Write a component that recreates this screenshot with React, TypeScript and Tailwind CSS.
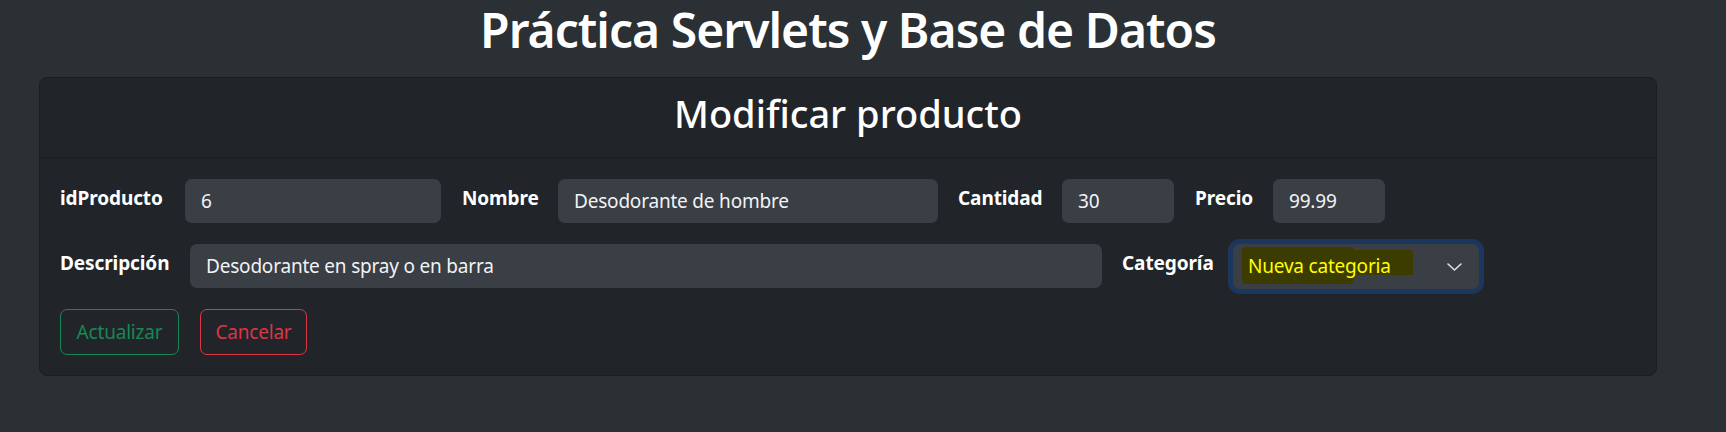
const Label = ({ text, w }: { text: string; w: string }) => (
  <label className={`${w} block shrink-0 whitespace-nowrap pt-[4px] text-[19px] leading-[30px] font-bold tracking-[-0.1px] text-white`}>
    {text}
  </label>
);

const Input = ({ value, w }: { value: string; w: string }) => (
  <div
    className={`${w} flex h-[44px] shrink-0 items-center rounded-[7px] bg-[#3a3e45] px-4 text-[19px] tracking-[-0.2px] text-[#f1f3f5]`}
  >
    {value}
  </div>
);

const App = () => {
  return (
    <div className="min-h-screen w-full bg-[#2b3035] font-['Noto_Sans',sans-serif]">
      <div className="w-[1696px] pb-10">
        <h1 className="text-center text-[48px] leading-[60px] font-semibold tracking-[-0.02em] text-white">
          Práctica Servlets y Base de Datos
        </h1>

        <div className="mx-[39px] mt-[17px] rounded-[8px] border border-[#1a1d21] bg-[#212529]">
          <div className="border-b border-[#1a1d21] pt-[11px] pb-[20px] text-center text-[38px] leading-[48px] font-medium text-white">
            Modificar producto
          </div>

          <div className="px-5 pt-[21px] pb-5">
            <div className="flex items-start">
              <Label text="idProducto" w="w-[104px]" />
              <div className="ml-[21px]">
                <Input value="6" w="w-[256px]" />
              </div>
              <div className="ml-[21px]">
                <Label text="Nombre" w="w-[76px]" />
              </div>
              <div className="ml-[20px]">
                <Input value="Desodorante de hombre" w="w-[380px]" />
              </div>
              <div className="ml-[20px]">
                <Label text="Cantidad" w="w-[84px]" />
              </div>
              <div className="ml-[20px]">
                <Input value="30" w="w-[112px]" />
              </div>
              <div className="ml-[21px]">
                <Label text="Precio" w="w-[57px]" />
              </div>
              <div className="ml-[21px]">
                <Input value="99.99" w="w-[112px]" />
              </div>
            </div>

            <div className="mt-[21px] flex items-start">
              <Label text="Descripción" w="w-[109px]" />
              <div className="ml-[21px]">
                <Input value="Desodorante en spray o en barra" w="w-[912px]" />
              </div>
              <div className="ml-[20px]">
                <Label text="Categoría" w="w-[90px]" />
              </div>
              <div className="ml-[21px]">
                <div className="relative flex h-[45px] w-[246px] items-center rounded-[7px] bg-[#3a3e45] pl-[15px] pr-4 ring-[5px] ring-[#1c375e]">
                  <div className="absolute left-[9px] top-[3px] h-[37px] w-[112px] rounded-[4px] bg-[#3c3c00]" />
                  <div className="absolute left-[100px] top-[6px] h-[25px] w-[80px] rounded-[2px] bg-[#3c3c00]" />
                  <span className="relative text-[19px] tracking-[-0.2px] text-[#ffff00]">Nueva categoria</span>
                  <svg
                    className="absolute right-[17px] top-[19px]"
                    width="15"
                    height="8"
                    viewBox="0 0 15 8"
                    fill="none"
                  >
                    <path d="M1 1l6.5 6L14 1" stroke="#dee2e6" strokeWidth="1.6" strokeLinecap="round" strokeLinejoin="round" />
                  </svg>
                </div>
              </div>
            </div>

            <div className="mt-5 flex gap-[21px]">
              <button className="h-[46px] w-[119px] rounded-[7px] border border-[#198754] text-[19px] tracking-[-0.2px] text-[#198754]">
                Actualizar
              </button>
              <button className="h-[46px] w-[107px] rounded-[7px] border border-[#dc3545] text-[19px] tracking-[-0.2px] text-[#dc3545]">
                Cancelar
              </button>
            </div>
          </div>
        </div>
      </div>
    </div>
  );
};

export default App;
